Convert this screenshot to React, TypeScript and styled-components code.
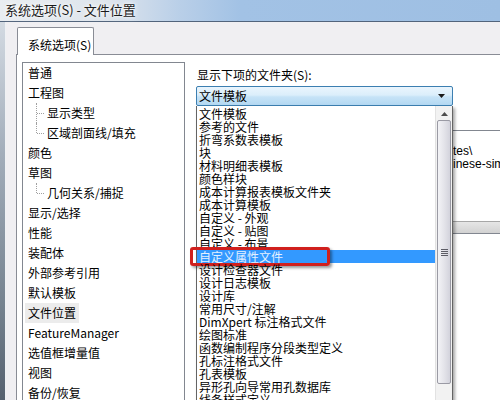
import React from 'react';
import styled, { createGlobalStyle } from 'styled-components';

interface TreeItem {
  label: string;
  child?: boolean;
  last?: boolean;
  selected?: boolean;
}

const treeItems: TreeItem[] = [
  { label: '普通' },
  { label: '工程图' },
  { label: '显示类型', child: true },
  { label: '区域剖面线/填充', child: true, last: true },
  { label: '颜色' },
  { label: '草图' },
  { label: '几何关系/捕捉', child: true, last: true },
  { label: '显示/选择' },
  { label: '性能' },
  { label: '装配体' },
  { label: '外部参考引用' },
  { label: '默认模板' },
  { label: '文件位置', selected: true },
  { label: 'FeatureManager' },
  { label: '选值框增量值' },
  { label: '视图' },
  { label: '备份/恢复' },
];

const folderTypes = [
  '文件模板',
  '参考的文件',
  '折弯系数表模板',
  '块',
  '材料明细表模板',
  '颜色样块',
  '成本计算报表模板文件夹',
  '成本计算模板',
  '自定义 - 外观',
  '自定义 - 贴图',
  '自定义 - 布景',
  '自定义属性文件',
  '设计检查器文件',
  '设计日志模板',
  '设计库',
  '常用尺寸/注解',
  'DimXpert 标注格式文件',
  '绘图标准',
  '函数编制程序分段类型定义',
  '孔标注格式文件',
  '孔表模板',
  '异形孔向导常用孔数据库',
  '线条样式定义',
];

const HIGHLIGHTED = 11;

// only the tail of each path shows past the open drop list
const folderPaths = ['tes\\', 'inese-simplified\\'];

const App = () => (
  <>
    <GlobalStyle />
    <Window>
      <TitleBar>
        <TitleText>系统选项(S) - 文件位置</TitleText>
      </TitleBar>
      <Frame>
        <FrameEdge />
        <Dialog>
          <TabStrip>
            <Tab>系统选项(S)</Tab>
          </TabStrip>
          <TabPage>
            <TreeBox>
              {treeItems.map((item) => (
                <TreeRow key={item.label} child={item.child}>
                  {item.child && <Connector last={item.last} />}
                  <TreeLabel selected={item.selected}>{item.label}</TreeLabel>
                </TreeRow>
              ))}
            </TreeBox>
            <RightPanel>
              <FieldLabel>显示下项的文件夹(S):</FieldLabel>
              <Combo>
                <ComboText>文件模板</ComboText>
                <svg width="7" height="4" viewBox="0 0 7 4">
                  <path d="M0 0h7L3.5 4z" fill="#1a1a1a" />
                </svg>
              </Combo>
              <FolderBox>
                <FolderRows>
                  {folderPaths.map((tail) => (
                    <FolderRow key={tail}>{tail}</FolderRow>
                  ))}
                </FolderRows>
                <HScroll />
              </FolderBox>
              <DropList>
                <Options>
                  {folderTypes.map((label, i) => (
                    <Option key={label} highlighted={i === HIGHLIGHTED}>
                      {label}
                      {i === HIGHLIGHTED && <RedMark />}
                    </Option>
                  ))}
                </Options>
                <ScrollBar>
                  <ScrollButton>
                    <svg width="7" height="4" viewBox="0 0 7 4">
                      <path d="M3.5 0L7 4H0z" fill="#4d4d4d" />
                    </svg>
                  </ScrollButton>
                  <Thumb>
                    <svg width="7" height="7" viewBox="0 0 7 7">
                      <path d="M0 .5h7M0 2.5h7M0 4.5h7M0 6.5h7" stroke="#5d5d66" strokeWidth="1" />
                    </svg>
                  </Thumb>
                </ScrollBar>
              </DropList>
            </RightPanel>
          </TabPage>
        </Dialog>
      </Frame>
    </Window>
  </>
);

const GlobalStyle = createGlobalStyle`
  html, body {
    margin: 0;
    padding: 0;
  }
  body {
    width: 500px;
    height: 400px;
    overflow: hidden;
    background: #f0f0f0;
    font-family: "Noto Sans CJK SC", "Noto Sans", sans-serif;
    color: #000;
  }
`;

const Window = styled.div`
  width: 500px;
  height: 400px;
  display: flex;
  flex-direction: column;
  overflow: hidden;
`;

const TitleBar = styled.div`
  height: 22px;
  box-sizing: border-box;
  flex: none;
  display: flex;
  align-items: center;
  padding: 0 0 1px 5px;
  border-bottom: 1px solid #52647c;
  background: linear-gradient(
    90deg,
    #e9edf1 0%,
    #dde4ec 22%,
    #b9cfe8 36%,
    #a2c2e5 48%,
    #9ebfe3 100%
  );
`;

const TitleText = styled.span`
  font-size: 13px;
  line-height: 16px;
  color: #1a1a1a;
  text-shadow: 0 0 6px #fff, 0 0 3px #fff;
`;

const Frame = styled.div`
  flex: 1;
  display: flex;
  min-height: 0;
`;

const FrameEdge = styled.div`
  width: 5px;
  flex: none;
  border-right: 1px solid #eef1f4;
  background: linear-gradient(180deg, #d3dae2 0%, #a2adba 35%, #75828f 75%, #56616f 100%);
`;

const Dialog = styled.div`
  flex: 1;
  display: flex;
  flex-direction: column;
  padding-left: 10px;
  background: #f0eff2;
  min-width: 0;
`;

const TabStrip = styled.div`
  height: 33px;
  box-sizing: border-box;
  flex: none;
  display: flex;
  align-items: flex-end;
  padding-left: 1px;
  border-bottom: 1px solid #898c95;
`;

const Tab = styled.div`
  width: 77px;
  height: 28px;
  box-sizing: border-box;
  margin-bottom: -1px;
  padding: 5px 0 0 10px;
  display: flex;
  align-items: center;
  font-size: 12px;
  background: #fff;
  border: 1px solid #898c95;
  border-bottom: none;
  border-radius: 2px 2px 0 0;
`;

const TabPage = styled.div`
  flex: 1;
  display: flex;
  align-items: flex-start;
  padding: 7px 0 0 5px;
  background: #fff;
  border-left: 1px solid #898c95;
  min-height: 0;
`;

const TreeBox = styled.div`
  width: 163px;
  height: 360px;
  flex: none;
  box-sizing: border-box;
  border: 1px solid #828790;
  background: #fff;
`;

const TreeRow = styled.div<{ child?: boolean }>`
  height: 20px;
  display: flex;
  align-items: center;
  padding-left: ${({ child }) => (child ? '13px' : '5px')};
  font-size: 12px;
  white-space: nowrap;
`;

const Connector = styled.span<{ last?: boolean }>`
  position: relative;
  width: 9px;
  height: 20px;
  margin-right: 2px;
  flex: none;
  &::before {
    content: '';
    position: absolute;
    left: 0;
    top: 0;
    height: ${({ last }) => (last ? '10px' : '20px')};
    border-left: 1px dotted #a0a0a0;
  }
  &::after {
    content: '';
    position: absolute;
    left: 1px;
    top: 10px;
    width: 7px;
    border-top: 1px dotted #a0a0a0;
  }
`;

const TreeLabel = styled.span<{ selected?: boolean }>`
  line-height: 20px;
  padding: 0 3px;
  margin-left: -3px;
  background: ${({ selected }) => (selected ? '#ececec' : 'transparent')};
`;

const RightPanel = styled.div`
  position: relative;
  flex: 1;
  min-width: 0;
  margin-left: 11px;
  padding-top: 6px;
  display: flex;
  flex-direction: column;
`;

const FieldLabel = styled.div`
  height: 14px;
  line-height: 14px;
  margin-left: 1px;
  font-size: 12px;
  white-space: nowrap;
`;

const Combo = styled.div`
  margin-top: 4px;
  width: 257px;
  height: 20px;
  box-sizing: border-box;
  display: flex;
  align-items: center;
  justify-content: space-between;
  padding: 0 7px 0 2px;
  border: 1px solid #3c7fb1;
  border-radius: 2px;
  background: linear-gradient(180deg, #eaf5fd 0%, #dbeefb 45%, #c6e3f7 55%, #b3d8f2 100%);
`;

const ComboText = styled.span`
  font-size: 12px;
  line-height: 14px;
`;

const FolderBox = styled.div`
  margin-top: 24px;
  width: 420px;
  height: 104px;
  box-sizing: border-box;
  display: flex;
  flex-direction: column;
  border: 1px solid #828790;
  background: #fff;
`;

const FolderRows = styled.div`
  flex: 1;
  padding: 14px 0 0 256px;
`;

const FolderRow = styled.div`
  height: 13px;
  line-height: 13px;
  font-family: "Liberation Sans", Arial, sans-serif;
  font-size: 12px;
  white-space: nowrap;
`;

const HScroll = styled.div`
  height: 11px;
  flex: none;
  border-top: 1px solid #a7a7a7;
  background: linear-gradient(180deg, #e6e6e6, #d2d2d2);
`;

const DropList = styled.div`
  position: absolute;
  top: 44px;
  left: 0;
  width: 257px;
  height: 300px;
  box-sizing: border-box;
  display: flex;
  background: #fff;
  border: 1px solid #646464;
  border-top: none;
  box-shadow: 2px 2px 3px rgba(0, 0, 0, 0.35);
`;

const Options = styled.div`
  flex: 1;
  padding-top: 1px;
`;

const Option = styled.div<{ highlighted?: boolean }>`
  position: relative;
  height: 13px;
  line-height: 13px;
  padding-left: 2px;
  font-size: 12px;
  white-space: nowrap;
  color: ${({ highlighted }) => (highlighted ? '#e4f0ff' : '#000')};
  background: ${({ highlighted }) => (highlighted ? '#3399ff' : 'transparent')};
`;

const RedMark = styled.span`
  position: absolute;
  left: -7px;
  top: -3px;
  width: 140px;
  height: 19px;
  box-sizing: border-box;
  border: 3px solid #d0201e;
  border-radius: 3px;
  box-shadow: 2px 2px 3px rgba(0, 0, 0, 0.4);
`;

const ScrollBar = styled.div`
  width: 16px;
  flex: none;
  display: flex;
  flex-direction: column;
  background: #f2f2f2;
  border-left: 1px solid #e2e2e2;
`;

const ScrollButton = styled.div`
  height: 14px;
  display: flex;
  align-items: center;
  justify-content: center;
  padding-top: 1px;
  box-sizing: border-box;
`;

const Thumb = styled.div`
  height: 264px;
  margin: 0 1px;
  box-sizing: border-box;
  display: flex;
  align-items: center;
  justify-content: center;
  border: 1px solid #9a9aa4;
  border-radius: 2px;
  background: linear-gradient(90deg, #f3f3f6 0%, #e4e4ea 50%, #d3d3dc 100%);
`;

export default App;
